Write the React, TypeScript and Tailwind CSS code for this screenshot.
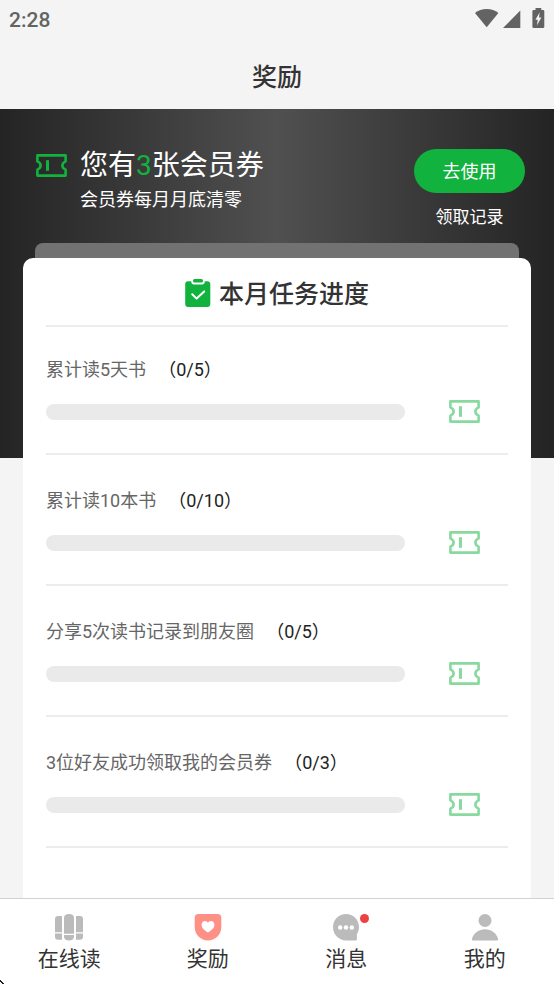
import clsx from "clsx";

type Task = {
  id: string;
  title: string;
  done: number;
  total: number;
};

const tasks: Task[] = [
  { id: "days", title: "累计读5天书", done: 0, total: 5 },
  { id: "books", title: "累计读10本书", done: 0, total: 10 },
  { id: "share", title: "分享5次读书记录到朋友圈", done: 0, total: 5 },
  { id: "friends", title: "3位好友成功领取我的会员券", done: 0, total: 3 },
];

const tabs = [
  { label: "在线读", Icon: BooksIcon },
  { label: "奖励", Icon: RewardIcon, active: true },
  { label: "消息", Icon: MessageIcon, unread: true },
  { label: "我的", Icon: UserIcon },
];

function TicketIcon({ className }: { className?: string }) {
  return (
    <svg viewBox="0 0 31 23" className={clsx("h-[23px] w-[31px] shrink-0", className)} aria-hidden="true">
      <path
        d="M1.4 1.4H29.6V7.4C27.6 8.2 26.4 9.6 26.4 11.5S27.6 14.8 29.6 15.6V21.6H1.4V15.6C3.4 14.8 4.6 13.4 4.6 11.5S3.4 8.2 1.4 7.4Z"
        fill="none"
        stroke="currentColor"
        strokeWidth="2.6"
        strokeLinejoin="round"
      />
      <path d="M10 6.2H13V16.8H10Z" fill="currentColor" />
    </svg>
  );
}

function ClipboardIcon() {
  return (
    <svg viewBox="0 0 26 28" className="h-7 w-[26px]" aria-hidden="true">
      <path
        d="M3 2.3H6.3V3C6.3 4.4 7.4 5.4 8.8 5.4H17.2C18.6 5.4 19.7 4.4 19.7 3V2.3H22.5C24.2 2.3 25.3 3.4 25.3 5V25C25.3 26.7 24.2 28 22.5 28H3C1.3 28 .2 26.7 .2 25V5C.2 3.4 1.3 2.3 3 2.3Z"
        fill="#12b23e"
      />
      <rect x="8" y="0" width="10" height="3.6" rx="1.6" fill="#12b23e" />
      <path
        d="M7.2 15.2L11.6 19.6L19.2 12.4"
        fill="none"
        stroke="#fff"
        strokeWidth="2"
        strokeLinecap="round"
        strokeLinejoin="round"
      />
    </svg>
  );
}

function BooksIcon() {
  return (
    <svg viewBox="0 0 28 28" className="size-7" fill="#bbb" aria-hidden="true">
      <path d="M3 3H7V19.2H0V6Q0 3 3 3Z" />
      <path d="M0 20.4H7V26.8H3Q0 26.8 0 23.8Z" />
      <path d="M9 5Q9 1 14 1T19 5V20.8H9Z" />
      <path d="M9 22H19V23.5Q19 27.5 14 27.5T9 23.5Z" />
      <path d="M21 3H25Q28 3 28 6V19.2H21Z" />
      <path d="M21 20.4H28V23.8Q28 26.8 25 26.8H21Z" />
    </svg>
  );
}

function RewardIcon() {
  return (
    <svg viewBox="0 0 28 28" className="size-7" aria-hidden="true">
      <path d="M4.5 1H23.5Q27.3 1 27.3 4.8V14.5C27.3 21.5 21 27.5 14 27.5S.7 21.5.7 14.5V4.8Q.7 1 4.5 1Z" fill="#ff9086" />
      <path
        d="M14 19.4C10.5 17.4 7.6 15 7.6 12C7.6 9.6 9.2 8.1 11 8.1C12.4 8.1 13.4 8.9 14 9.9C14.6 8.9 15.6 8.1 17 8.1C18.8 8.1 20.4 9.6 20.4 12C20.4 15 17.5 17.4 14 19.4Z"
        fill="#fff"
      />
    </svg>
  );
}

function MessageIcon() {
  return (
    <svg viewBox="0 0 28 28" className="size-7" aria-hidden="true">
      <path d="M14 1C21.3 1 27 6.8 27 14.1C27 16.8 26.3 19.1 24.9 21.3V26.3Q24.9 27.5 23.7 27.5H14C6.7 27.5 1 21.5 1 14.1C1 6.8 6.7 1 14 1Z" fill="#bbb" />
      <circle cx="8.2" cy="14.5" r="2.2" fill="#fff" />
      <circle cx="14" cy="14.5" r="2.2" fill="#fff" />
      <circle cx="19.8" cy="14.5" r="2.2" fill="#fff" />
    </svg>
  );
}

function UserIcon() {
  return (
    <svg viewBox="0 0 28 28" className="size-7" fill="#bbb" aria-hidden="true">
      <circle cx="14" cy="7.5" r="6.5" />
      <path d="M2.2 27.5Q.6 27.5 .9 25.9C2.6 20.1 7.8 16.2 14 16.2S25.4 20.1 27.1 25.9Q27.4 27.5 25.8 27.5Z" />
    </svg>
  );
}

function StatusBar() {
  return (
    <div className="flex h-9 items-center justify-between px-[9px] text-[#636363]">
      <span className="pt-1 text-[21px] leading-7 font-medium">2:28</span>
      <svg viewBox="0 0 70 22" className="h-[22px] w-[70px]" fill="currentColor" aria-hidden="true">
        <path d="M0 6C3.2 3.4 7.2 2 11.7 2S20.2 3.4 23.4 6L11.7 20.3Z" />
        <path d="M28 21L45.3 3.5V21Z" />
        <path
          fillRule="evenodd"
          d="M60.5 1H66.3V3H68Q69.3 3 69.3 4.3V19.8Q69.3 21 68 21H58.7Q57.4 21 57.4 19.8V4.3Q57.4 3 58.7 3H60.5ZM64.6 5.5L60.4 12.8H62.8L61.8 18.5L66.4 10.6H64Z"
        />
      </svg>
    </div>
  );
}

function TaskRow({ task }: { task: Task }) {
  return (
    <li className="border-b-2 border-[#ececec] pt-8 pb-[30px] first:pt-[29px]">
      <div className="flex gap-3 text-[18px] leading-7">
        <span id={task.id} className="text-[#666]">
          {task.title}
        </span>
        <span className="text-[#222]">
          （{task.done}/{task.total}）
        </span>
      </div>
      <div className="mt-4 flex items-center pr-7">
        <div
          role="progressbar"
          aria-labelledby={task.id}
          aria-valuenow={task.done}
          aria-valuemax={task.total}
          className="mr-11 h-4 flex-1 overflow-hidden rounded-full bg-[#eaeaea]"
        >
          <div className="h-full bg-[#12b23e]" style={{ width: `${(task.done / task.total) * 100}%` }} />
        </div>
        <TicketIcon className="text-[#88d99e]" />
      </div>
    </li>
  );
}

export default function App() {
  return (
    <div className="relative flex min-h-screen flex-col bg-[#f4f4f4] font-[Roboto,'Noto_Sans_CJK_SC',sans-serif] text-[#333]">
      <StatusBar />
      <header className="flex h-[73px] items-center justify-center pt-[10px]">
        <h1 className="text-[25px] leading-9 font-medium">奖励</h1>
      </header>

      <main className="flex flex-1 flex-col bg-[linear-gradient(90deg,#242424,#505050_50%,#242424)] bg-[length:100%_349px] bg-no-repeat px-[23px]">
        <section className="flex h-[134px] justify-between pt-10 pr-[6px] pl-[13px] text-white">
          <div className="flex gap-[13px]">
            <TicketIcon className="mt-[5px] text-[#12b23e]" />
            <div className="pt-px">
              <h2 className="text-[28px] leading-8">
                您有<span className="text-[#12b23e]">3</span>张会员券
              </h2>
              <p className="mt-1 text-[18px] leading-7">会员券每月月底清零</p>
            </div>
          </div>
          <div className="flex flex-col items-center">
            <button type="button" className="h-11 w-[111px] rounded-full bg-[#12b23e] text-[18px]">
              去使用
            </button>
            <a href="#records" className="mt-3 text-[17px] leading-6">
              领取记录
            </a>
          </div>
        </section>

        <div className="mx-3 h-[15px] rounded-t-[8px] bg-[#727272]" />
        <section className="flex-1 rounded-t-[10px] bg-white px-[23px] pb-[46px]">
          <div className="flex h-[69px] items-center justify-center gap-2 border-b-2 border-[#ececec] pt-[2px]">
            <ClipboardIcon />
            <h2 className="pt-1 text-[25px] leading-9 font-medium">本月任务进度</h2>
          </div>
          <ul>
            {tasks.map((task) => (
              <TaskRow key={task.id} task={task} />
            ))}
          </ul>
        </section>
      </main>

      <nav className="sticky bottom-0 grid h-[86px] grid-cols-4 border-t border-[#d2d2d2] bg-white">
        {tabs.map(({ label, Icon, active, unread }) => (
          <a
            key={label}
            href="#"
            aria-current={active ? "page" : undefined}
            className="flex flex-col items-center gap-[2px] pt-[14px] text-[21px] leading-8"
          >
            <span className="relative">
              <Icon />
              {unread && <span className="absolute top-px -right-[9px] size-[9px] rounded-full bg-[#f04142]" />}
            </span>
            {label}
          </a>
        ))}
        {/* tip of the mouse pointer in the corner */}
        <svg viewBox="0 0 4 4" className="absolute bottom-0 left-0 size-1" aria-hidden="true">
          <path d="M0 0H1V1H2V2H3V3H4V4H2V3H1V2H0Z" fill="#222" />
        </svg>
      </nav>
    </div>
  );
}
